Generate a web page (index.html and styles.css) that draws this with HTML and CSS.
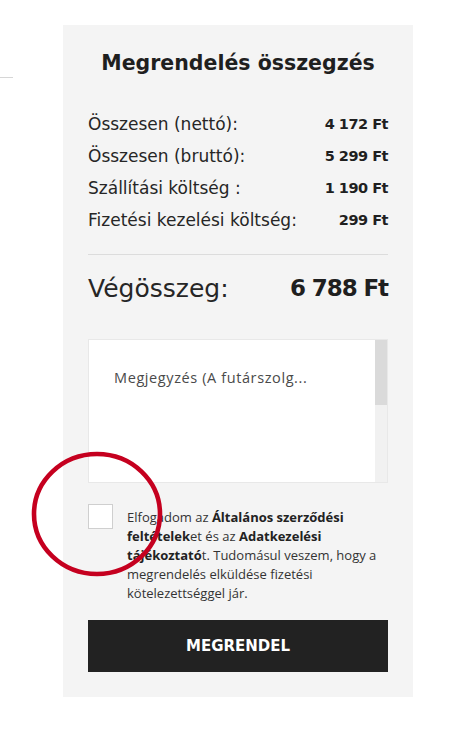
FILE: index.html
```html
<!DOCTYPE html>
<html lang="hu">
<head>
<meta charset="utf-8">
<title>Megrendelés összegzés</title>
<link rel="stylesheet" href="styles.css">
</head>
<body>
<div class="page">
  <aside class="side">
    <div class="side-line"></div>
  </aside>
  <section class="summary">
    <h2 class="title">Megrendelés összegzés</h2>
    <div class="rows">
      <div class="row"><span>Összesen (nettó):</span><b>4 172 Ft</b></div>
      <div class="row"><span>Összesen (bruttó):</span><b>5 299 Ft</b></div>
      <div class="row"><span>Szállítási költség :</span><b>1 190 Ft</b></div>
      <div class="row"><span>Fizetési kezelési költség:</span><b>299 Ft</b></div>
    </div>
    <div class="total"><span>Végösszeg:</span><b>6 788 Ft</b></div>
    <div class="note">
      <div class="note-text">Megjegyzés (A futárszolg...</div>
      <div class="scrollbar"><div class="thumb"></div></div>
    </div>
    <div class="accept">
      <span class="checkbox"></span>
      <p class="accept-text">Elfogadom az <b>Általános szerződési<br>feltételek</b>et és az <b>Adatkezelési<br>tájékoztató</b>t. Tudomásul veszem, hogy a<br>megrendelés elküldése fizetési<br>kötelezettséggel jár.</p>
      <svg class="mark" width="136" height="130" viewBox="0 0 136 130"><ellipse cx="67" cy="64" rx="63" ry="60" fill="none" stroke="#c5001f" stroke-width="4.6"/></svg>
    </div>
    <button class="order">MEGRENDEL</button>
  </section>
</div>
</body>
</html>
```
FILE: styles.css
```css
* { box-sizing: border-box; }
body {
  margin: 0;
  background: #fff;
  font-family: "DejaVu Sans", "Open Sans", sans-serif;
  color: #222;
}
.page {
  display: flex;
  align-items: flex-start;
}
.side {
  width: 63px;
  flex: none;
  padding-top: 77px;
}
.side-line {
  width: 13px;
  height: 1px;
  background: #d6d6d6;
}
.summary {
  margin-top: 25px;
  width: 350px;
  background: #f4f4f4;
  padding: 0 25px 25px;
  display: flex;
  flex-direction: column;
}
.title {
  margin: 0;
  padding-top: 24px;
  height: 83px;
  text-align: center;
  font-size: 20.5px;
  line-height: 28px;
  font-weight: 700;
  color: #1f1f1f;
}
.rows {
  display: flex;
  flex-direction: column;
  border-bottom: 1px solid #dcdcdc;
  padding-bottom: 18px;
}
.row {
  display: flex;
  justify-content: space-between;
  align-items: center;
  height: 32px;
  font-size: 17px;
  font-weight: 400;
  color: #262626;
}
.row b {
  font-weight: 700;
  font-size: 14.5px;
  letter-spacing: -0.5px;
  color: #1f1f1f;
}
.total {
  display: flex;
  justify-content: space-between;
  align-items: center;
  height: 66px;
  font-size: 25px;
  color: #262626;
}
.total b {
  font-weight: 700;
  font-size: 23px;
  letter-spacing: -1.1px;
  color: #1f1f1f;
}
.note {
  margin-top: 18px;
  height: 144px;
  background: #fff;
  border: 1px solid #e8e8e8;
  display: flex;
}
.note-text {
  flex: 1;
  padding: 28px 0 0 25px;
  font-family: "Open Sans", sans-serif;
  font-size: 14.5px;
  letter-spacing: 0.6px;
  color: #4a4a4a;
}
.scrollbar {
  width: 12px;
  background: #f1f1f1;
}
.thumb {
  height: 65px;
  background: #dadada;
}
.accept {
  position: relative;
  display: flex;
  gap: 14px;
  margin-top: 21px;
}
.checkbox {
  width: 25px;
  height: 25px;
  flex: none;
  background: #fff;
  border: 1px solid #cfcfcf;
}
.accept-text {
  margin: 4px 0 0;
  font-family: "Open Sans", sans-serif;
  font-size: 13px;
  line-height: 19px;
  color: #333;
}
.accept-text b { color: #222; font-weight: 700; }
.mark {
  position: absolute;
  left: -58px;
  top: -54px;
  pointer-events: none;
}
.order {
  margin-top: 17px;
  height: 52px;
  border: 0;
  background: #222;
  color: #fff;
  font-family: "DejaVu Sans", sans-serif;
  font-size: 15px;
  font-weight: 700;
  cursor: pointer;
}
```
